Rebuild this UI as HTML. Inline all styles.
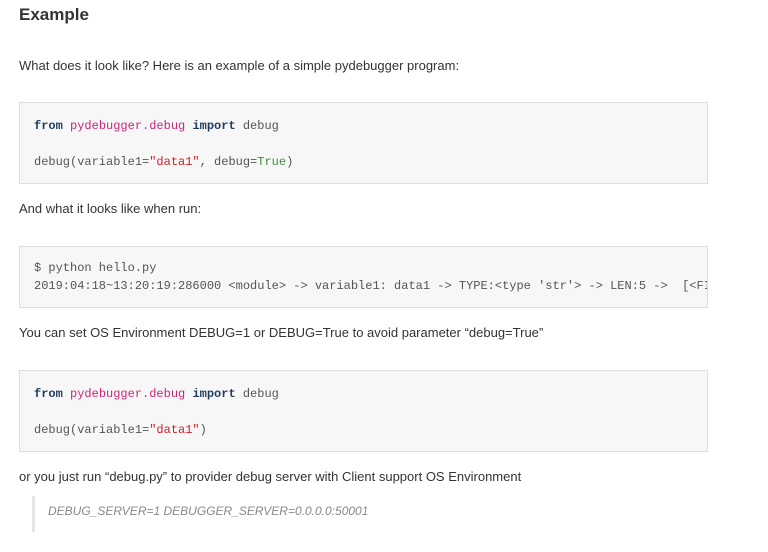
<!DOCTYPE html><html><head><meta charset="utf-8"><style>
body{margin:0;width:768px;height:552px;overflow:hidden;background:#fff;font-family:"Liberation Sans",sans-serif;color:#333;position:relative}
.a{position:absolute;left:19px;white-space:nowrap}
h2{position:absolute;left:19px;top:5px;margin:0;font-size:17px;font-weight:bold;color:#333}
p{margin:0;font-size:13px;line-height:18px}
pre{position:absolute;left:19px;width:659px;margin:0;padding:0 14px;background:#f7f7f7;border:1px solid #ddd;font-family:"Liberation Mono",monospace;font-size:12px;line-height:18px;color:#555;overflow:hidden;white-space:pre}
.k{color:#1f3d5c;font-weight:bold}.m{color:#c8267a}.s{color:#d0202a}.t{color:#3d8c3d}
</style></head><body>
<h2>Example</h2>
<p class="a" style="top:57px">What does it look like? Here is an example of a simple pydebugger program:</p>
<pre style="top:102px;height:66px;padding-top:14px"><span class="k">from</span> <span class="m">pydebugger.debug</span> <span class="k">import</span> debug

debug(variable1=<span class="s">"data1"</span>, debug=<span class="t">True</span>)</pre>
<p class="a" style="top:200px">And what it looks like when run:</p>
<pre style="top:246px;height:48px;padding-top:12px">$ python hello.py
2019:04:18~13:20:19:286000 &lt;module&gt; -&gt; variable1: data1 -&gt; TYPE:&lt;type 'str'&gt; -&gt; LEN:5 -&gt;  [&lt;FILE&gt;]</pre>
<p class="a" style="top:324px">You can set OS Environment DEBUG=1 or DEBUG=True to avoid parameter “debug=True”</p>
<pre style="top:370px;height:66px;padding-top:14px"><span class="k">from</span> <span class="m">pydebugger.debug</span> <span class="k">import</span> debug

debug(variable1=<span class="s">"data1"</span>)</pre>
<p class="a" style="top:468px">or you just run “debug.py” to provider debug server with Client support OS Environment</p>
<div style="position:absolute;left:32px;top:496px;height:36px;border-left:3px solid #e5e5e5"></div>
<p class="a" style="left:48px;top:502px;font-size:12px;font-style:italic;color:#888">DEBUG_SERVER=1 DEBUGGER_SERVER=0.0.0.0:50001</p>
</body></html>
